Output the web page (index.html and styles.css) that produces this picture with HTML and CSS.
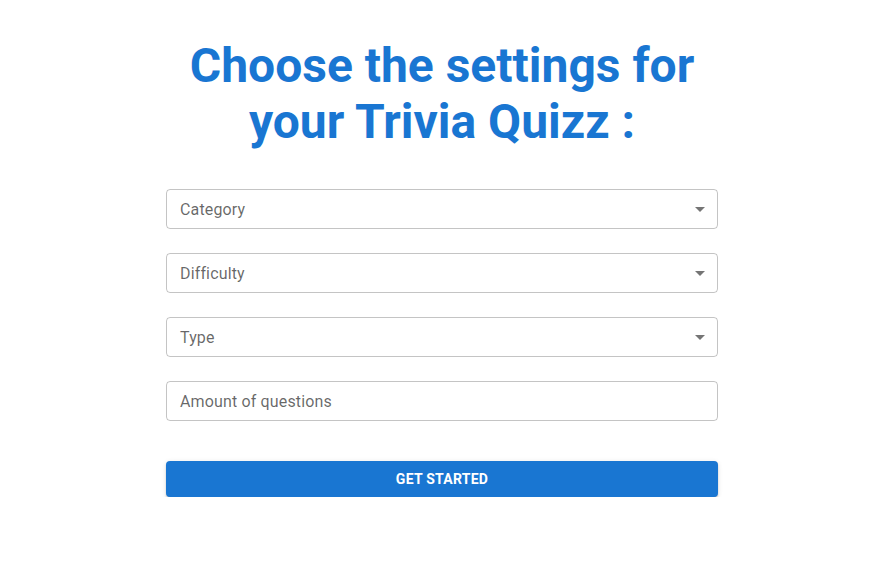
FILE: index.html
```html
<!DOCTYPE html>
<html>
<head>
<meta charset="utf-8">
<link rel="stylesheet" href="styles.css">
</head>
<body>
<main class="page">
  <h1 class="title">Choose the settings for your Trivia Quizz :</h1>
  <form class="form">
    <div class="field select"><span class="label">Category</span><svg class="arrow" viewBox="0 0 24 24" width="24" height="24"><path d="M7 10l5 5 5-5z"/></svg></div>
    <div class="field select"><span class="label">Difficulty</span><svg class="arrow" viewBox="0 0 24 24" width="24" height="24"><path d="M7 10l5 5 5-5z"/></svg></div>
    <div class="field select"><span class="label">Type</span><svg class="arrow" viewBox="0 0 24 24" width="24" height="24"><path d="M7 10l5 5 5-5z"/></svg></div>
    <div class="field"><span class="label">Amount of questions</span></div>
    <button type="button" class="btn">GET STARTED</button>
  </form>
</main>
</body>
</html>
```
FILE: styles.css
```css
* { box-sizing: border-box; }
html, body { margin: 0; padding: 0; background: #fff; }
body { font-family: Roboto, "Noto Sans", Arial, sans-serif; }
.page {
  width: 552px;
  margin: 0 auto;
  padding-top: 38px;
  position: relative;
  left: 3px;
}
.title {
  margin: 0;
  text-align: center;
  color: #1976d2;
  font-size: 48px;
  font-weight: 700;
  line-height: 56px;
  padding: 0 20px;
}
.form {
  margin-top: 39px;
  display: flex;
  flex-direction: column;
}
.field {
  height: 40px;
  border: 1px solid rgba(0,0,0,0.23);
  border-radius: 4px;
  display: flex;
  align-items: center;
  padding: 0 2px 0 13px;
  margin-bottom: 24px;
}
.label {
  flex: 1;
  font-size: 16px;
  color: rgba(0,0,0,0.6);
  letter-spacing: 0.15px;
}
.arrow { fill: rgba(0,0,0,0.54); margin-right: 3px; }
.btn {
  margin-top: 16px;
  height: 36px;
  border: none;
  border-radius: 4px;
  background: #1976d2;
  color: #fff;
  font-family: inherit;
  font-size: 14px;
  font-weight: 700;
  letter-spacing: 0.25px;
  box-shadow: 0 3px 1px -2px rgba(0,0,0,0.2), 0 2px 2px 0 rgba(0,0,0,0.14), 0 1px 5px 0 rgba(0,0,0,0.12);
}
```
